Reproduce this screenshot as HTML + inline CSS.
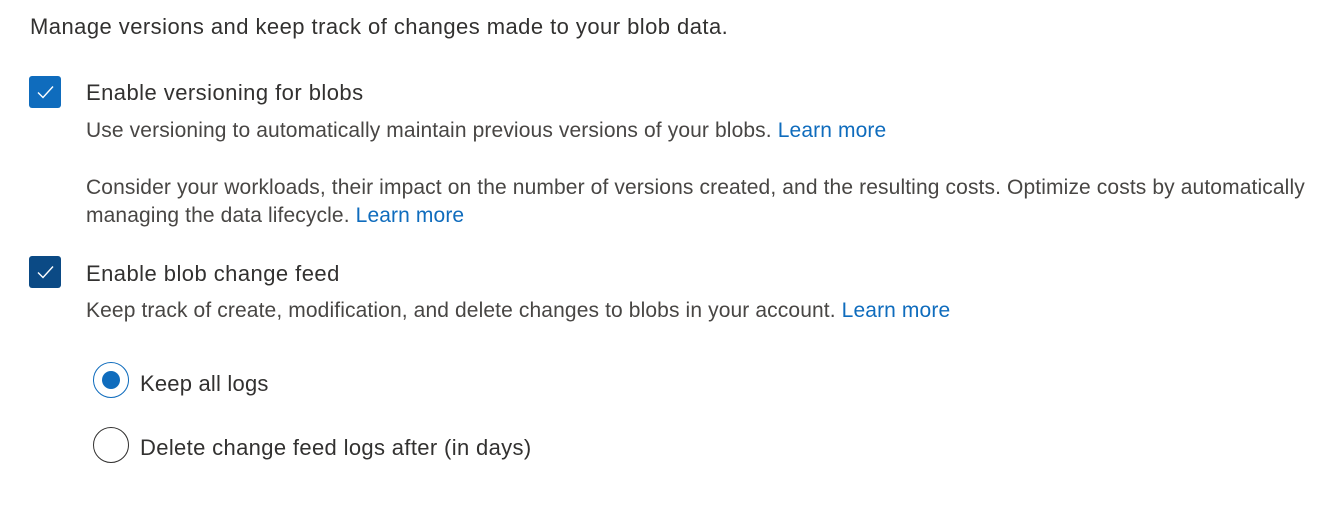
<!DOCTYPE html>
<html><head><style>
body{margin:0;width:1326px;height:514px;background:#fff;font-family:"Liberation Sans",sans-serif;color:#323130;position:relative;overflow:hidden}
.t{position:absolute;white-space:nowrap;font-size:22px;line-height:26px;letter-spacing:0.45px}
.d{color:#484644;font-size:21px;letter-spacing:0.12px}
a{color:#0f6cbd;text-decoration:none}
.cb{position:absolute;width:32px;height:32px;border-radius:3px;background:#0f6cbd}
.r{position:absolute;border-radius:50%;box-sizing:border-box}
</style></head><body>
<div class="t" style="left:30px;top:14px">Manage versions and keep track of changes made to your blob data.</div>
<div class="cb" style="left:29px;top:76px"><svg width="32" height="32"><path d="M9 16.5l5 5 10-11" stroke="#fff" stroke-width="1.4" fill="none"/></svg></div>
<div class="t" style="left:86px;top:80px">Enable versioning for blobs</div>
<div class="t d" style="left:86px;top:118px">Use versioning to automatically maintain previous versions of your blobs. <a>Learn more</a></div>
<div class="t d" style="left:86px;top:175px">Consider your workloads, their impact on the number of versions created, and the resulting costs. Optimize costs by automatically</div>
<div class="t d" style="left:86px;top:203px">managing the data lifecycle. <a>Learn more</a></div>
<div class="cb" style="left:29px;top:256px;background:#0b4a85"><svg width="32" height="32"><path d="M9 16.5l5 5 10-11" stroke="#fff" stroke-width="1.4" fill="none"/></svg></div>
<div class="t" style="left:86px;top:261px">Enable blob change feed</div>
<div class="t d" style="left:86px;top:298px">Keep track of create, modification, and delete changes to blobs in your account. <a>Learn more</a></div>
<div class="r" style="left:93px;top:362px;width:36px;height:36px;border:1.5px solid #0f6cbd"></div>
<div class="r" style="left:102px;top:371px;width:18px;height:18px;background:#0f6cbd"></div>
<div class="t" style="left:140px;top:371px;letter-spacing:0.2px">Keep all logs</div>
<div class="r" style="left:93px;top:427px;width:36px;height:36px;border:1.5px solid #323130"></div>
<div class="t" style="left:140px;top:435px;letter-spacing:0.35px">Delete change feed logs after (in days)</div>
</body></html>
